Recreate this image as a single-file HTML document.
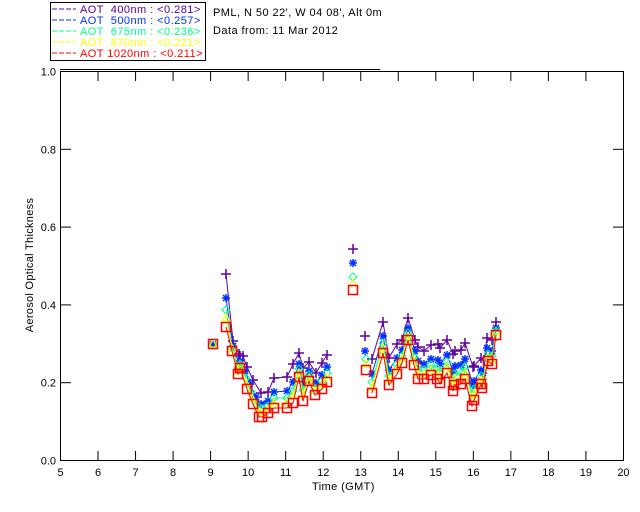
<!DOCTYPE html>
<html><head><style>
body{margin:0;background:#fff;width:640px;height:512px;overflow:hidden}
svg{display:block}
text{font-family:"Liberation Sans",sans-serif;font-size:11px}
</style></head><body>
<svg id="s" width="640" height="512" xmlns="http://www.w3.org/2000/svg">
<rect x="50.5" y="2.5" width="155" height="58" fill="none" stroke="#000"/>
<g stroke-width="1" stroke-dasharray="5,2">
<line x1="52" x2="76" y1="9" y2="9" stroke="#6000a0"/>
<line x1="52" x2="76" y1="20" y2="20" stroke="#0030ff"/>
<line x1="52" x2="76" y1="31" y2="31" stroke="#00ff90"/>
<line x1="52" x2="76" y1="42" y2="42" stroke="#ffff00"/>
<line x1="52" x2="76" y1="53" y2="53" stroke="#ff0000"/>
</g>
<g letter-spacing="0.45">
<text x="80" y="13" fill="#6000a0" xml:space="preserve">AOT  400nm : &lt;0.281&gt;</text>
<text x="80" y="24" fill="#0030ff" xml:space="preserve">AOT  500nm : &lt;0.257&gt;</text>
<text x="80" y="35" fill="#00ff90" xml:space="preserve">AOT  675nm : &lt;0.236&gt;</text>
<text x="80" y="46" fill="#ffff00" xml:space="preserve">AOT  870nm : &lt;0.221&gt;</text>
<text x="80" y="57" fill="#ff0000" xml:space="preserve">AOT 1020nm : &lt;0.211&gt;</text>
<text x="213" y="16" fill="#000">PML, N 50 22', W 04 08', Alt 0m</text>
<text x="213" y="34" fill="#000">Data from: 11 Mar 2012</text>
</g>
<line x1="60" x2="380" y1="69.5" y2="69.5" stroke="#000"/>
<rect x="60.5" y="71.5" width="563" height="389" fill="none" stroke="#000"/>
<g id="ax" stroke="#000"></g>
<g id="lb" fill="#000"></g>
<text x="312" y="490" fill="#000" letter-spacing="0.4">Time (GMT)</text>
<text transform="translate(33,265) rotate(-90)" text-anchor="middle" fill="#000" font-size="10" letter-spacing="0.3">Aerosol Optical Thickness</text>
<g id="d" fill="none"></g>
</svg>
<script>
var ns="http://www.w3.org/2000/svg";
function el(p,t,a,txt){var e=document.createElementNS(ns,t);for(var k in a)e.setAttribute(k,a[k]);if(txt)e.textContent=txt;p.appendChild(e);return e;}
var ax=document.getElementById('ax'),lb=document.getElementById('lb');
for(var h=5;h<=20;h++){var x=60.5+(h-5)*37.53;
 el(ax,'line',{x1:x,x2:x,y1:460,y2:451});el(ax,'line',{x1:x,x2:x,y1:72,y2:81});
 el(lb,'text',{x:x,y:476,'text-anchor':'middle'},String(h));}
for(var i=0;i<=5;i++){var y=460.5-i*77.8;
 el(ax,'line',{x1:61,x2:71,y1:y,y2:y});el(ax,'line',{x1:613,x2:623,y1:y,y2:y});
 el(lb,'text',{x:56,y:y+4,'text-anchor':'end'},(i*0.2).toFixed(1));}
var P=[[213,344],[226,274],[233,341],[239,354],[243,356],[247,367],[253,380],[261,393],[268,392],[274,378],[287,377],[293,364],[299,353],[303,368],[309,362],[316,373],[322,363],[327,355]];
var R=[[213,344],[226,327],[232,351],[238,374],[240,368],[247,389],[253,404],[259,417],[262,417],[268,413],[274,408],[287,408],[293,403],[299,377],[303,401],[309,381],[315,395],[322,389],[327,382]];
P.splice(4,0,[240,356]);
var P2=[[365,336],[372,359],[383,322],[389,358],[397,344],[402,340],[408,318],[415,340],[418,347],[424,351],[431,345],[438,344],[440,348],[447,340],[453,354],[455,351],[461,350],[465,343],[473,367],[474,366],[481,358],[484,360],[487,338],[492,340],[496,322]];
var R2=[[366,370],[372,393],[383,353],[389,385],[397,374],[402,363],[408,340],[414,365],[418,379],[424,379],[431,375],[437,379],[440,383],[447,373],[453,391],[454,385],[461,384],[465,379],[472,406],[474,400],[481,384],[482,388],[488,361],[492,364],[496,335]];
var cols=["#6000a0","#0030ff","#00ff90","#ffff00","#ff0000"],fr=[0,0.45,0.68,0.83,1];
var d=document.getElementById('d');
function mk(g,c,k,x,y){
 if(k==0){el(g,'path',{d:'M'+(x-5)+' '+y+'h10M'+x+' '+(y-5)+'v10',stroke:c,'stroke-width':1.5});}
 else if(k==1){el(g,'path',{d:'M'+(x-4)+' '+y+'h8M'+x+' '+(y-4)+'v8M'+(x-3)+' '+(y-3)+'l6 6M'+(x+3)+' '+(y-3)+'l-6 6',stroke:c,'stroke-width':1.5});}
 else if(k==2){el(g,'path',{d:'M'+x+' '+(y-4)+'l4 4l-4 4l-4 -4z',stroke:c});}
 else if(k==3){el(g,'path',{d:'M'+x+' '+(y-4)+'l4 7h-8z',stroke:c});}
 else {el(g,'rect',{x:x-4.5,y:y-4.5,width:9,height:9,stroke:c,'stroke-width':1.5});}
}
function seg(Pa,Ra){
 var n=Math.min(Pa.length,Ra.length);
 for(var k=0;k<5;k++){var pts=[];
  for(var i=0;i<n;i++){var x=Ra[i][0]*fr[k]+Pa[i][0]*(1-fr[k]);var y=Pa[i][1]+(Ra[i][1]-Pa[i][1])*fr[k];pts.push([Math.round(x),Math.round(y)]);}
  var g=el(d,'g',{});
  el(g,'polyline',{points:pts.slice(1).map(function(p){return p.join(',')}).join(' '),stroke:cols[k]});
  pts.forEach(function(p){mk(g,cols[k],k,p[0],p[1]);});
 }
}
seg(P,R);seg(P2,R2);
var iso=[249,263,277,283,290];
for(var k=0;k<5;k++)mk(d,cols[k],k,353,iso[k]);
</script>
</body></html>
